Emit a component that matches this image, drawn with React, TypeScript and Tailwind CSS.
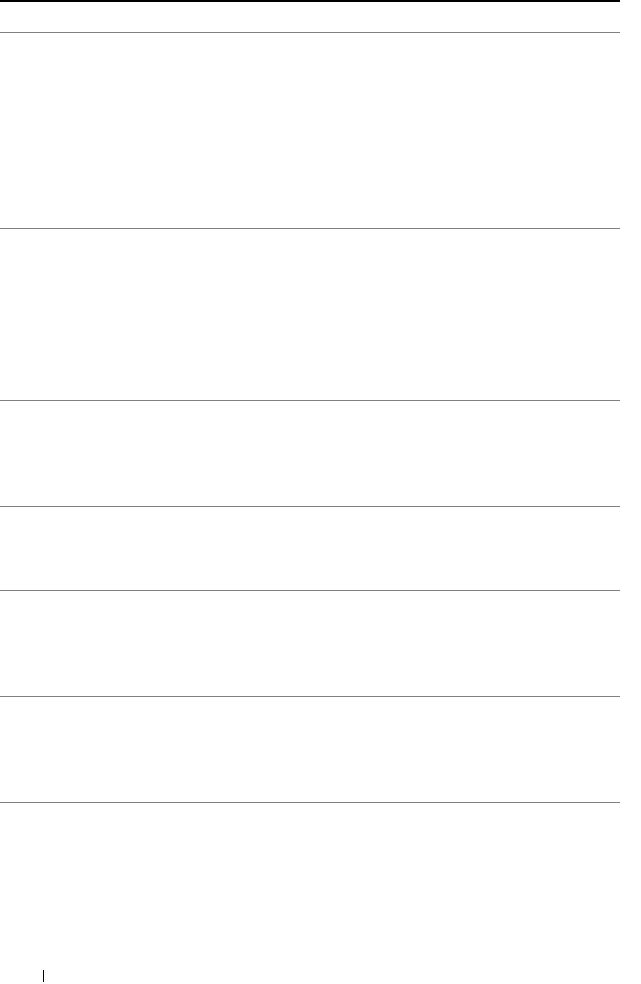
export default function App() {
  // row heights between the gray rules
  const rows = [196, 172, 106, 84, 106, 106];
  const rowClasses = [
    "h-[196px]",
    "h-[172px]",
    "h-[106px]",
    "h-[84px]",
    "h-[106px]",
    "h-[106px]",
  ];

  return (
    <div className="min-h-[984px] bg-white font-['Liberation_Sans',sans-serif]">
      <div className="flex w-[620px] flex-col">
        <div className="h-[32px] border-t-2 border-black" />
        {rows.map((_, i) => (
          <div key={i} className={`${rowClasses[i]} border-t border-[#808080]`} />
        ))}
        <div className="h-[168px] border-t border-[#808080]" />
      </div>
      <div className="pl-[43px]">
        <div className="h-[12px] w-px bg-black" />
      </div>
    </div>
  );
}
